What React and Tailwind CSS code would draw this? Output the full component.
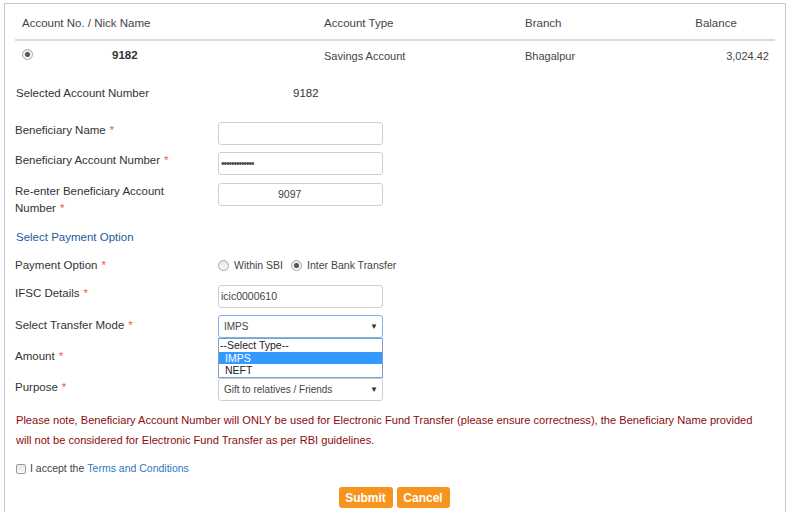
import React from "react";

const Star = () => <span className="text-[#e8603c] ml-[4px]">*</span>;

const Radio = ({ checked }) => (
  <span className="inline-flex items-center justify-center w-[11px] h-[11px] rounded-full border border-[#a8a8a8] bg-gradient-to-b from-[#e6e6e6] to-[#fafafa]">
    {checked && <span className="w-[5px] h-[5px] rounded-full bg-[#555]" />}
  </span>
);

const Input = ({ value, className = "" }) => (
  <div
    className={`w-[165px] h-[23px] border border-[#cfcfcf] rounded-[3px] bg-white flex items-center text-[10.5px] text-[#444] ${className}`}
  >
    {value}
  </div>
);

const Select = ({ value, focus }) => (
  <div
    className={`w-[165px] h-[23px] border rounded-[3px] bg-white flex items-center justify-between pl-[5px] pr-[4px] text-[10px] text-[#444] ${
      focus ? "border-[#7fb3e8]" : "border-[#cfcfcf]"
    }`}
  >
    <span>{value}</span>
    <span className="text-[8px] text-[#333]">▼</span>
  </div>
);

const Row = ({ label, children, className = "" }) => (
  <div className={`flex items-start ${className}`}>
    <div className="w-[203px] leading-[17px] text-[#333]">{label}</div>
    {children}
  </div>
);

export default function App() {
  return (
    <div
      className="w-[793px] h-[512px] bg-white overflow-hidden pt-[3px] text-[11.5px]"
      style={{ fontFamily: '"Liberation Sans", Arial, sans-serif' }}
    >
      <div className="ml-[4px] w-[782px] h-[520px] border-t border-l border-r border-[#c9c9c9] pl-[10px] pr-[10px]">
        {/* account table */}
        <div className="flex h-[37px] pt-[4px] items-center text-[#444] border-b-2 border-[#dcdcdc]">
          <div className="w-[302px] pl-[7px]">Account No. / Nick Name</div>
          <div className="w-[201px] pl-[7px]">Account Type</div>
          <div className="w-[139px] pl-[7px]">Branch</div>
          <div className="flex-1 text-center">Balance</div>
        </div>
        <div className="flex h-[30px] items-center text-[#444] text-[11px]">
          <div className="w-[302px] pl-[7px] flex items-center">
            <span className="-mt-[5px]">
              <Radio checked />
            </span>
            <span className="ml-[79px] font-bold text-[#333] text-[11.5px]">9182</span>
          </div>
          <div className="w-[201px] pl-[7px]">Savings Account</div>
          <div className="w-[139px] pl-[7px]">Bhagalpur</div>
          <div className="flex-1 text-right pr-[6px]">3,024.42</div>
        </div>

        <div className="flex mt-[14px] leading-[17px] text-[#333] pl-[1px]">
          <div className="w-[277px]">Selected Account Number</div>
          <div>9182</div>
        </div>

        {/* form */}
        <Row
          className="mt-[20px]"
          label={
            <>
              Beneficiary Name
              <Star />
            </>
          }
        >
          <Input />
        </Row>
        <Row
          className="mt-[7px]"
          label={
            <>
              Beneficiary Account Number
              <Star />
            </>
          }
        >
          <Input value={<span className="pl-[2px] text-[10px] tracking-[-1px]">•••••••••••••</span>} />
        </Row>
        <Row
          className="mt-[8px]"
          label={
            <>
              Re-enter Beneficiary Account
              <br />
              Number
              <Star />
            </>
          }
        >
          <Input value={<span className="pl-[59px]">9097</span>} />
        </Row>

        <div className="mt-[12px] leading-[17px] text-[#1c5b9b] pl-[1px]">
          Select Payment Option
        </div>

        <Row
          className="mt-[11px]"
          label={
            <>
              Payment Option
              <Star />
            </>
          }
        >
          <div className="flex items-center h-[17px] text-[#444] text-[10.5px]">
            <Radio />
            <span className="ml-[5px]">Within SBI</span>
            <span className="ml-[8px] flex">
              <Radio checked />
            </span>
            <span className="ml-[5px]">Inter Bank Transfer</span>
          </div>
        </Row>

        <Row
          className="mt-[11px]"
          label={
            <>
              IFSC Details
              <Star />
            </>
          }
        >
          <Input value={<span className="pl-[2px]">icic0000610</span>} />
        </Row>

        <Row
          className="mt-[7px]"
          label={
            <span className="block pt-[2px]">
              Select Transfer Mode
              <Star />
            </span>
          }
        >
          <div className="relative">
            <Select value="IMPS" focus />
            <div className="absolute left-0 top-[23px] w-[165px] border border-[#7d9fd0] bg-white text-[10.5px] leading-[12.5px] text-[#222] z-10">
              <div className="pl-[1px]">--Select Type--</div>
              <div className="pl-[6px] bg-[#3399ff] text-white">IMPS</div>
              <div className="pl-[6px]">NEFT</div>
            </div>
          </div>
        </Row>

        <Row
          className="mt-[9px]"
          label={
            <span className="block pt-[1px]">
              Amount
              <Star />
            </span>
          }
        >
          <Input />
        </Row>

        <Row
          className="mt-[8px]"
          label={
            <span className="block pt-[1px]">
              Purpose
              <Star />
            </span>
          }
        >
          <Select value="Gift to relatives / Friends" />
        </Row>

        <div className="mt-[9px] w-[748px] leading-[20px] text-[11.1px] text-[#8a0c0c] pl-[1px]">
          Please note, Beneficiary Account Number will ONLY be used for Electronic Fund Transfer (please ensure
          correctness), the Beneficiary Name provided will not be considered for Electronic Fund Transfer as per
          RBI guidelines.
        </div>

        <div className="mt-[10px] flex items-center leading-[17px] pl-[1px] text-[10.5px]">
          <span className="w-[10px] h-[10px] rounded-[2px] border border-[#9a9a9a] bg-gradient-to-b from-[#e8e8e8] to-[#f8f8f8]" />
          <span className="ml-[4px] text-[#444]">I accept the</span>
          <span className="ml-[3px] text-[#2f77bd]">Terms and Conditions</span>
        </div>

        <div className="mt-[10px] flex justify-center gap-[4px] pr-[2px]">
          <button className="w-[54px] h-[21px] rounded-[3px] bg-[#f7941d] text-white font-bold text-[12px]">
            Submit
          </button>
          <button className="w-[53px] h-[21px] rounded-[3px] bg-[#f7941d] text-white font-bold text-[12px]">
            Cancel
          </button>
        </div>
      </div>
    </div>
  );
}
